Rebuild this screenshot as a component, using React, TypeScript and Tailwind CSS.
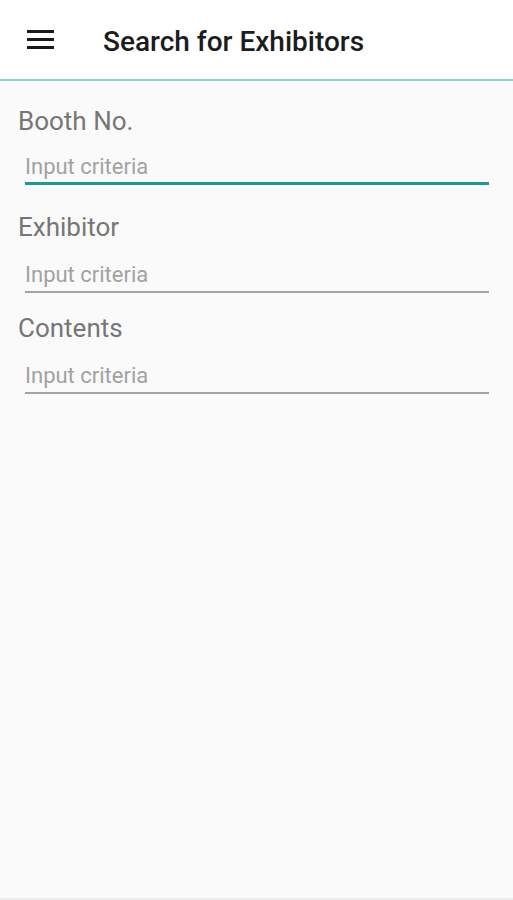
import React from "react";

const font = { fontFamily: "Roboto, 'Noto Sans', sans-serif" };

type FieldProps = {
  label: string;
  focused?: boolean;
  last?: boolean;
};

function Field({ label, focused, last }: FieldProps) {
  return (
    <div className={focused ? "pb-[27px]" : last ? "" : "pb-[20px]"}>
      <div className="pl-[18px] text-[26px] leading-[30px] text-[#767676]">{label}</div>
      <div
        className={
          focused
            ? "ml-[25px] mr-[24px] mt-[18px] border-b-[3px] border-[#1f9a8c] pb-[2px]"
            : "ml-[25px] mr-[24px] mt-[20px] border-b-2 border-[#a3a3a3] pb-[3px]"
        }
      >
        <input
          type="text"
          placeholder="Input criteria"
          className="block h-[26px] w-full bg-transparent p-0 text-[22px] leading-[26px] text-[#333] outline-none placeholder:text-[#a2a2a2]"
          style={font}
        />
      </div>
    </div>
  );
}

export default function App() {
  return (
    <main className="flex h-[900px] w-full flex-col bg-[#fafafa]" style={font}>
      <header className="flex h-[81px] shrink-0 items-start border-b-2 border-[#8fd0d3] bg-white">
        <button className="ml-[27px] mt-[30px] flex h-[19px] w-[27px] flex-col justify-between" aria-label="Menu">
          <span className="block h-[3px] w-[27px] bg-[#1a1a1a]" />
          <span className="block h-[3px] w-[27px] bg-[#1a1a1a]" />
          <span className="block h-[3px] w-[27px] bg-[#1a1a1a]" />
        </button>
        <h1 className="ml-[49px] mt-[26px] text-[28px] font-medium leading-[32px] text-[#1c1c1c]">Search for Exhibitors</h1>
      </header>
      <section className="flex-1 border-b-2 border-[#ececec] pt-[25px]">
        <Field label="Booth No." focused />
        <Field label="Exhibitor" />
        <Field label="Contents" last />
      </section>
    </main>
  );
}
